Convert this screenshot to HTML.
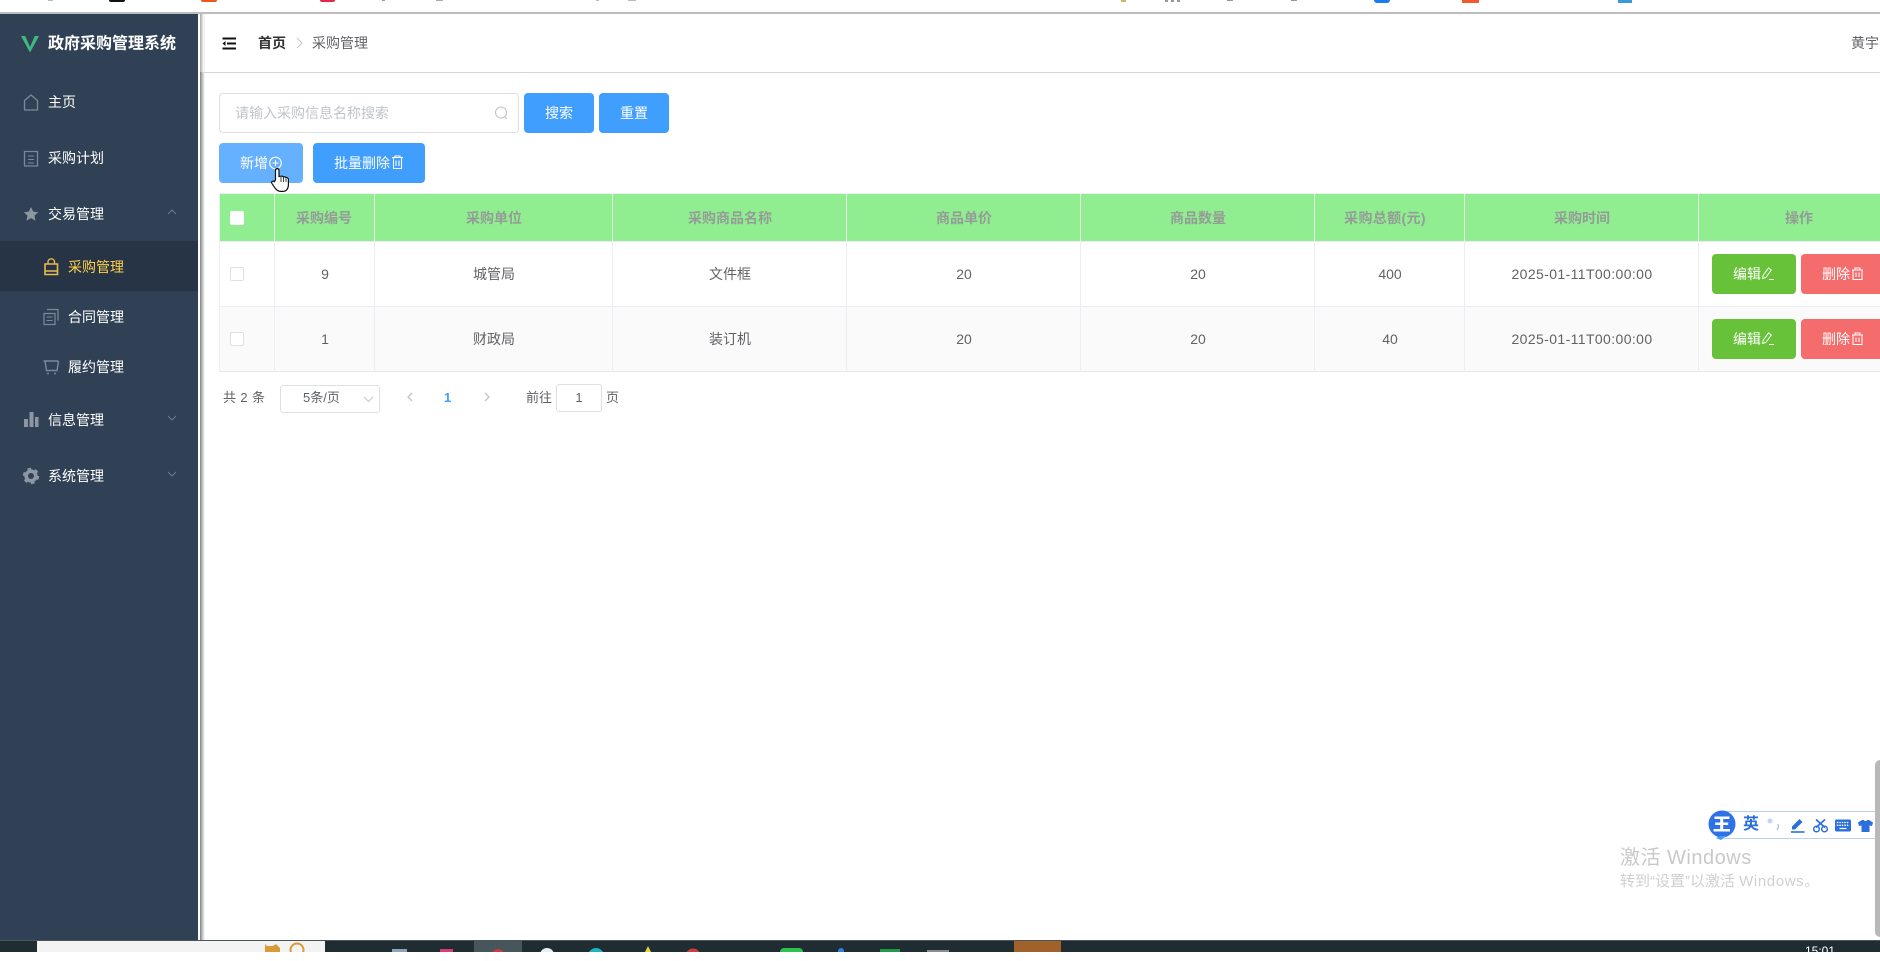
<!DOCTYPE html>
<html lang="zh-CN">
<head>
<meta charset="utf-8">
<title>政府采购管理系统</title>
<style>
html,body{margin:0;padding:0;background:#fff}
body{position:relative;width:1880px;height:952px;overflow:hidden;font-family:"Liberation Sans","Noto Sans CJK SC",sans-serif;font-size:14px;color:#606266;filter:blur(.3px)}
div,span{box-sizing:border-box}
.a{position:absolute}
.t{position:absolute;line-height:20px;height:20px;white-space:nowrap}
.m{color:#fff}
.c{position:absolute;text-align:center;line-height:20px;height:20px;white-space:nowrap}
.h{color:#949c97;font-weight:700}
.b{position:absolute;border-radius:4px;color:#fff;text-align:center;white-space:nowrap}
.v{position:absolute;width:1px;background:#ebeef5}
.vh{position:absolute;width:1px;background:#e8f8e8}
.cb{position:absolute;left:230px;width:14px;height:14px;border:1px solid #dcdfe6;border-radius:2px;background:#fff}
</style>
</head>
<body>
<!-- top strip remnants -->
<div class="a" style="left:0;top:0;width:1880px;height:12px;background:#fff"></div>
<div class="a" style="left:0;top:12px;width:1880px;height:2px;background:#bdbdbd"></div>
<div class="a" style="left:48px;top:0;width:5px;height:1px;background:#bbb"></div>
<div class="a" style="left:109px;top:0;width:16px;height:2px;background:#111;border-radius:0 0 4px 4px"></div>
<div class="a" style="left:201px;top:0;width:16px;height:2px;background:#f0561e;border-radius:0 0 5px 5px"></div>
<div class="a" style="left:320px;top:0;width:15px;height:2px;background:#e8264a;border-radius:0 0 5px 5px"></div>
<div class="a" style="left:382px;top:0;width:3px;height:1px;background:#999"></div>
<div class="a" style="left:436px;top:0;width:7px;height:1px;background:#aaa"></div>
<div class="a" style="left:596px;top:0;width:3px;height:1px;background:#bbb"></div>
<div class="a" style="left:628px;top:0;width:8px;height:1px;background:#bbb"></div>
<div class="a" style="left:1121px;top:0;width:5px;height:2px;background:#c4b96a"></div>
<div class="a" style="left:1165px;top:0;width:18px;height:2px;background:repeating-linear-gradient(90deg,#999 0 3px,#fff 3px 6px)"></div>
<div class="a" style="left:1227px;top:0;width:6px;height:1px;background:#999"></div>
<div class="a" style="left:1291px;top:0;width:6px;height:1px;background:#999"></div>
<div class="a" style="left:1374px;top:0;width:16px;height:3px;background:#1a7cf0;border-radius:0 0 5px 5px"></div>
<div class="a" style="left:1462px;top:0;width:17px;height:3px;background:#f25a2a"></div>
<div class="a" style="left:1618px;top:0;width:14px;height:3px;background:#3a9ad9"></div>

<!-- sidebar -->
<div class="a" style="left:0;top:14px;width:198px;height:926px;background:#304156"></div>
<div class="a" style="left:0;top:241px;width:198px;height:50px;background:#263445"></div>
<div class="a" style="left:200px;top:14px;width:5px;height:926px;background:linear-gradient(90deg,#7d8288,#c8cacc 55%,#fff)"></div>
<div class="a" style="left:200px;top:14px;width:4px;height:58px;background:linear-gradient(90deg,#a5a8ab,#fff)"></div>

<div class="t" style="left:48px;top:33px;font-size:16px;line-height:20px;font-weight:700;color:#fff;transform:translateY(1.500px)">政府采购管理系统</div>
<div class="t m" style="left:48px;top:92px">主页</div>
<div class="t m" style="left:48px;top:148px">采购计划</div>
<div class="t m" style="left:48px;top:204px">交易管理</div>
<div class="t" style="left:68px;top:257px;color:#ffd04b">采购管理</div>
<div class="t m" style="left:68px;top:307px">合同管理</div>
<div class="t m" style="left:68px;top:357px">履约管理</div>
<div class="t m" style="left:48px;top:410px">信息管理</div>
<div class="t m" style="left:48px;top:466px">系统管理</div>

<!-- header -->
<div class="a" style="left:204px;top:72px;width:1676px;height:1px;background:#d4d6d9"></div>
<div class="t" style="left:258px;top:33px;font-weight:700;color:#303133">首页</div>
<div class="t" style="left:312px;top:33px;color:#606266">采购管理</div>
<div class="t" style="left:1851px;top:33px;color:#606266">黄宇</div>

<!-- search -->
<div class="a" style="left:219px;top:93px;width:300px;height:40px;border:1px solid #dcdfe6;border-radius:4px;background:#fff"></div>
<div class="t" style="left:235px;top:103px;color:#c0c4cc">请输入采购信息名称搜索</div>
<div class="b" style="left:524px;top:93px;width:70px;height:40px;line-height:40px;background:#409eff">搜索</div>
<div class="b" style="left:599px;top:93px;width:70px;height:40px;line-height:40px;background:#409eff">重置</div>
<div class="b" style="left:219px;top:143px;width:84px;height:40px;background:#66b1ff"></div>
<div class="t m" style="left:240px;top:153px">新增</div>
<div class="b" style="left:313px;top:143px;width:112px;height:40px;background:#409eff"></div>
<div class="t m" style="left:334px;top:153px">批量删除</div>

<!-- table -->
<div class="a" style="left:219px;top:194px;width:1661px;height:47px;background:#90ee90"></div>
<div class="a" style="left:219px;top:241px;width:1661px;height:66px;background:#fff"></div>
<div class="a" style="left:219px;top:307px;width:1661px;height:65px;background:#fafafa"></div>
<div class="a" style="left:219px;top:193px;width:1661px;height:1px;background:#ebeef5"></div>
<div class="a" style="left:219px;top:241px;width:1661px;height:1px;background:#ebeef5"></div>
<div class="a" style="left:219px;top:306px;width:1661px;height:1px;background:#ebeef5"></div>
<div class="a" style="left:219px;top:371px;width:1661px;height:1px;background:#e4e7ed"></div>
<div class="v" style="left:219px;top:194px;height:178px"></div>

<div class="vh" style="left:274px;top:194px;height:47px"></div><div class="v" style="left:274px;top:241px;height:131px"></div>
<div class="vh" style="left:374px;top:194px;height:47px"></div><div class="v" style="left:374px;top:241px;height:131px"></div>
<div class="vh" style="left:612px;top:194px;height:47px"></div><div class="v" style="left:612px;top:241px;height:131px"></div>
<div class="vh" style="left:846px;top:194px;height:47px"></div><div class="v" style="left:846px;top:241px;height:131px"></div>
<div class="vh" style="left:1080px;top:194px;height:47px"></div><div class="v" style="left:1080px;top:241px;height:131px"></div>
<div class="vh" style="left:1314px;top:194px;height:47px"></div><div class="v" style="left:1314px;top:241px;height:131px"></div>
<div class="vh" style="left:1464px;top:194px;height:47px"></div><div class="v" style="left:1464px;top:241px;height:131px"></div>
<div class="vh" style="left:1698px;top:194px;height:47px"></div><div class="v" style="left:1698px;top:241px;height:131px"></div>

<div class="cb" style="top:211px;border-color:#fff"></div>
<div class="cb" style="top:267px"></div>
<div class="cb" style="top:332px"></div>

<div class="c h" style="left:274px;width:100px;top:208px">采购编号</div>
<div class="c h" style="left:375px;width:238px;top:208px">采购单位</div>
<div class="c h" style="left:613px;width:234px;top:208px">采购商品名称</div>
<div class="c h" style="left:847px;width:234px;top:208px">商品单价</div>
<div class="c h" style="left:1081px;width:234px;top:208px">商品数量</div>
<div class="c h" style="left:1310px;width:150px;top:208px;letter-spacing:.35px">采购总额(元)</div>
<div class="c h" style="left:1465px;width:234px;top:208px">采购时间</div>
<div class="c h" style="left:1699px;width:200px;top:208px">操作</div>

<div class="c" style="left:275px;width:100px;top:264px">9</div>
<div class="c" style="left:375px;width:238px;top:264px">城管局</div>
<div class="c" style="left:613px;width:234px;top:264px">文件框</div>
<div class="c" style="left:847px;width:234px;top:264px">20</div>
<div class="c" style="left:1081px;width:234px;top:264px">20</div>
<div class="c" style="left:1315px;width:150px;top:264px">400</div>
<div class="c" style="left:1465px;width:234px;top:264px;letter-spacing:.39px">2025-01-11T00:00:00</div>

<div class="c" style="left:275px;width:100px;top:329px">1</div>
<div class="c" style="left:375px;width:238px;top:329px">财政局</div>
<div class="c" style="left:613px;width:234px;top:329px">装订机</div>
<div class="c" style="left:847px;width:234px;top:329px">20</div>
<div class="c" style="left:1081px;width:234px;top:329px">20</div>
<div class="c" style="left:1315px;width:150px;top:329px">40</div>
<div class="c" style="left:1465px;width:234px;top:329px;letter-spacing:.39px">2025-01-11T00:00:00</div>

<div class="b" style="left:1712px;top:254px;width:84px;height:40px;background:#67c23a"></div>
<div class="b" style="left:1801px;top:254px;width:84px;height:40px;background:#f56c6c"></div>
<div class="b" style="left:1712px;top:319px;width:84px;height:40px;background:#67c23a"></div>
<div class="b" style="left:1801px;top:319px;width:84px;height:40px;background:#f56c6c"></div>
<div class="t m" style="left:1733px;top:264px">编辑</div>
<div class="t m" style="left:1822px;top:264px">删除</div>
<div class="t m" style="left:1733px;top:329px">编辑</div>
<div class="t m" style="left:1822px;top:329px">删除</div>

<!-- pagination -->
<div class="t" style="left:223px;top:388px;font-size:13px;letter-spacing:.4px">共 2 条</div>
<div class="a" style="left:280px;top:385px;width:100px;height:28px;border:1px solid #dcdfe6;border-radius:3px;background:#fff"></div>
<div class="t" style="left:303px;top:388px;font-size:13px">5条/页</div>
<div class="t" style="left:444px;top:388px;font-size:13px;font-weight:700;color:#409eff">1</div>
<div class="t" style="left:526px;top:388px;font-size:13px">前往</div>
<div class="a" style="left:556px;top:384px;width:46px;height:28px;border:1px solid #dcdfe6;border-radius:3px;background:#fff"></div>
<div class="c" style="left:556px;width:46px;top:388px;font-size:13px">1</div>
<div class="t" style="left:606px;top:388px;font-size:13px">页</div>

<!-- windows watermark -->
<div class="t" style="left:1620px;top:848px;font-size:20px;color:#c9c9c9;letter-spacing:.5px">激活 Windows</div>
<div class="t" style="left:1620px;top:872px;font-size:15px;color:#d0d0d0">转到“设置”以激活 <span style="letter-spacing:.6px">Windows。</span></div>

<!-- IME bar -->
<div class="a" style="left:1722px;top:811px;width:158px;height:28px;background:#fff;border-top:1px solid #bcd0f0;border-bottom:1px solid #bcd0f0"></div>
<div class="t" style="left:1743px;top:815px;font-size:16px;font-weight:700;color:#2b6fdc">英</div>

<!-- right scroll -->
<div class="a" style="left:1875px;top:760px;width:5px;height:177px;background:#b8b8b8;border-radius:5px 0 0 5px"></div>

<!-- taskbar -->
<div class="a" style="left:0;top:940px;width:1880px;height:12px;background:#1f2c31;border-top:1px solid #4a555a"></div>
<div class="a" style="left:37px;top:941px;width:288px;height:11px;background:#f3f3f3"></div>
<div class="a" style="left:474px;top:941px;width:48px;height:11px;background:#47565a"></div>
<div class="a" style="left:1014px;top:941px;width:47px;height:11px;background:#a0622a"></div>
<div class="t" style="left:1805px;top:941px;font-size:12px;color:#fff">15:01</div>

<!-- icons -->
<svg class="a" style="left:0;top:0" width="1880" height="952" viewBox="0 0 1880 952" fill="none">
  <!-- logo -->
  <path d="M21 36h4.200L30 47l4.800-11H39L30 52.500z" fill="#41b883"/>
  <!-- hamburger -->
  <path d="M222.500 38.500h13.500M227 43.500h9M222.500 48.500h13.500" stroke="#111" stroke-width="2"/>
  <path d="M225.500 41l-3 2.500 3 2.500z" fill="#111"/>
  <!-- breadcrumb sep -->
  <path d="M297 38l5 5-5 5" stroke="#c0c4cc" stroke-width="1"/>
  <!-- home -->
  <path d="M24.500 110v-9.500L31 95l6.500 5.500V110z" stroke="#7d8896" stroke-width="1.300"/>
  <!-- doc -->
  <path d="M24.500 151.500h13v14.500h-13z" stroke="#7d8896" stroke-width="1.300"/>
  <path d="M28 156h6M28 159.500h6M28 163h6" stroke="#7d8896" stroke-width="1"/>
  <!-- star -->
  <path d="M31 207l2.200 4.600 5 .6-3.700 3.400 1 5-4.500-2.500-4.500 2.500 1-5-3.700-3.400 5-.6z" fill="#8d96a3"/>
  <!-- chevrons -->
  <path d="M168 214l4-4 4 4" stroke="#6f7b8a" stroke-width="1"/>
  <path d="M168 416l4 4 4-4M168 472l4 4 4-4" stroke="#6f7b8a" stroke-width="1"/>
  <!-- bag -->
  <path d="M45 264h12.500v10.500H45z" stroke="#e8bb4b" stroke-width="1.600"/>
  <path d="M48 264v-2.500a3.300 3.300 0 0 1 6.500 0V264M45 271h12.500" stroke="#e8bb4b" stroke-width="1.400"/>
  <!-- copy -->
  <path d="M44 313.500h11v11H44z" stroke="#7d8896" stroke-width="1.200"/>
  <path d="M47 309.500h11v11" stroke="#7d8896" stroke-width="1.200"/>
  <path d="M46.500 317h6M46.500 320.500h6" stroke="#7d8896" stroke-width="1"/>
  <!-- cart -->
  <path d="M43.500 361h15M45 361l1.500 9.500h10.500l1.500-9.500" stroke="#7d8896" stroke-width="1.400"/>
  <circle cx="48" cy="373.500" r="1" fill="#7d8896"/><circle cx="55" cy="373.500" r="1" fill="#7d8896"/>
  <!-- bars -->
  <path d="M24 419h4v8h-4zM29.500 412h4v15h-4zM35 417h3.500v10H35z" fill="#8d96a3"/>
  <!-- gear -->
  <circle cx="31" cy="476" r="4.800" stroke="#8d96a3" stroke-width="3.600"/>
  <circle cx="31" cy="476" r="7" stroke="#8d96a3" stroke-width="2.400" stroke-dasharray="3.660 3.670"/>
  <!-- search magnifier -->
  <circle cx="501" cy="112.500" r="5.500" stroke="#c0c4cc" stroke-width="1.100"/>
  <path d="M505 117l1.800 1.800" stroke="#c0c4cc" stroke-width="1.100"/>
  <!-- plus circle -->
  <circle cx="275.500" cy="163" r="5.800" stroke="#fff" stroke-width="1.100"/>
  <path d="M272.500 163h6M275.500 160v6" stroke="#fff" stroke-width="1"/>
  <!-- trash batch -->
  <g stroke="#fff" stroke-width="1.100">
    <path d="M392 157.500h11M395 157.500v-1.500h5v1.500M393.500 157.500v11h8v-11M396 160.500v5.500M399 160.500v5.500"/>
  </g>
  <!-- edit & trash rows -->
  <g stroke="#fff" stroke-width="1">
    <path d="M1763 275.500l5.500-7.500 2.800 2-5.500 7.500-3 1zM1769 279.500h5"/>
    <path d="M1763 340.500l5.500-7.500 2.800 2-5.500 7.500-3 1zM1769 344.500h5"/>
    <path d="M1852 270h11M1855 270v-2h5v2M1853 270v9.500h9V270M1856 272.500v4.500M1859 272.500v4.500"/>
    <path d="M1852 335h11M1855 335v-2h5v2M1853 335v9.500h9V335M1856 337.500v4.500M1859 337.500v4.500"/>
  </g>
  <!-- pagination glyphs -->
  <path d="M364 397l4.500 4.500 4.500-4.500" stroke="#c0c4cc" stroke-width="1"/>
  <path d="M412 393l-4 4 4 4" stroke="#c0c4cc" stroke-width="1.300"/>
  <path d="M485 393l4 4-4 4" stroke="#c0c4cc" stroke-width="1.300"/>
  <!-- hand cursor -->
  <path d="M275.500 180v-9.500c0-2.500 3.500-2.500 3.500 0v6l2-.3c1-.2 2 .2 2.300.8 1-.4 2-.2 2.500.6 1.200-.4 2.600.4 2.600 1.800v5.500c0 3.500-2 6.500-5.500 6.500h-2.500c-2.500 0-4-1.500-5.500-3.500l-3-4.500c-1-1.800 1.200-3 2.500-1.700z" fill="#fff" stroke="#111" stroke-width="1.200"/>
  <path d="M281 177v5M283.500 177.500v4.500M286 178.500v3.500" stroke="#111" stroke-width=".8"/>
  <!-- IME -->
  <circle cx="1722" cy="824" r="13.500" fill="#2d72e6"/>
  <path d="M1716 838l4-2h6l-5 4z" fill="#3f9cf0"/>
  <path d="M1714.500 816.500h15v2.500h-6.300v3.500h5v2.500h-5v4h6.800v2.500h-16.500v-2.500h6.700v-4h-5v-2.500h5v-3.500h-5.700z" fill="#fff"/>
  <circle cx="1770" cy="821" r="2.500" fill="#c5d6f3"/>
  <path d="M1778 824l.5 3-1.500 3" stroke="#a9c1ea" stroke-width="1.300"/>
  <path d="M1791 832h13.500" stroke="#2b6fdc" stroke-width="1.600"/>
  <path d="M1792 829.500v-3l7.500-7.500 3 3-7.500 7.500z" fill="#2b6fdc"/>
  <circle cx="1816.500" cy="829" r="2.800" stroke="#2b6fdc" stroke-width="1.500"/>
  <circle cx="1824.500" cy="829" r="2.800" stroke="#2b6fdc" stroke-width="1.500"/>
  <path d="M1816 819.500l9 8M1825 819.500l-9 8" stroke="#2b6fdc" stroke-width="1.700"/>
  <rect x="1835" y="819.500" width="16" height="12" rx="1.500" fill="#2b6fdc"/>
  <path d="M1836.800 822.500h12.400M1836.800 825.300h12.400" stroke="#fff" stroke-width="1.300" stroke-dasharray="1.500 1"/>
  <path d="M1839.500 828.500h7" stroke="#fff" stroke-width="1.300"/>
  <path d="M1858 822.500l4-2.500h1.800c.6 1.500 2.800 1.500 3.400 0h1.800l4 2.500-1 3.500-2.500-.6v6.600h-8v-6.600l-2.500.6z" fill="#2b6fdc"/>
  <!-- taskbar bits -->
  <path d="M265 944l2 2h6l3-2 4 4v4h-15z" fill="#d99a3a"/>
  <circle cx="297" cy="950" r="6.500" stroke="#d99a3a" stroke-width="2"/>
  <rect x="392" y="949" width="15" height="3" fill="#8fa3b8"/>
  <rect x="440" y="949" width="13" height="3" fill="#d83a7a"/>
  <circle cx="498" cy="955" r="6" fill="#d23b3b"/>
  <circle cx="547" cy="955" r="7" fill="#e8eef5"/>
  <circle cx="596" cy="956" r="8" fill="#1fb3c2"/>
  <path d="M645 952l3-6 3 6z" fill="#e8d43a"/>
  <circle cx="693" cy="956" r="7.500" fill="#d23b3b"/>
  <rect x="780" y="948" width="23" height="8" rx="4" fill="#2fc14f"/>
  <circle cx="841" cy="951" r="3" fill="#2f7fe0"/>
  <rect x="880" y="949" width="20" height="3" fill="#1f9a4a"/>
  <rect x="927" y="950" width="22" height="2" fill="#8b8f92"/>
</svg>
</body>
</html>
